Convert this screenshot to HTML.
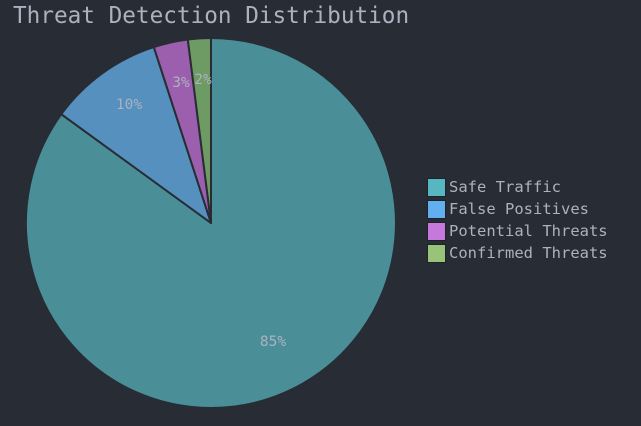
<!DOCTYPE html>
<html><head><style>
html,body{margin:0;padding:0;background:#282c34;width:641px;height:426px;overflow:hidden}
svg{display:block}
text{font-family:"DejaVu Sans Mono","Liberation Mono",monospace}
</style></head><body>
<svg width="641" height="426" viewBox="0 0 641 426">
<rect width="641" height="426" fill="#282c34"/>
<text x="13" y="23" font-size="22.7" fill="#abb2bf">Threat Detection Distribution</text>
<g stroke="#282c34" stroke-width="2" stroke-linejoin="round">
<path d="M211,223 L211,38 A185,185 0 1 1 61.3,114.2 Z" fill="#4a8f98"/>
<path d="M211,223 L61.3,114.2 A185,185 0 0 1 153.8,47.1 Z" fill="#5590bf"/>
<path d="M211,223 L153.8,47.1 A185,185 0 0 1 187.8,39.5 Z" fill="#9c5fad"/>
<path d="M211,223 L187.8,39.5 A185,185 0 0 1 211,38 Z" fill="#6e9a64"/>
</g>
<g font-size="14.5" fill="#abb2bf" text-anchor="middle">
<text x="273" y="346">85%</text>
<text x="129" y="109">10%</text>
<text x="181" y="87">3%</text>
<text x="203" y="84">2%</text>
</g>
<g stroke="#1f2329" stroke-width="1">
<rect x="427.5" y="178.5" width="18" height="18" fill="#56b6c2"/>
<rect x="427.5" y="200.5" width="18" height="18" fill="#61afef"/>
<rect x="427.5" y="222.5" width="18" height="18" fill="#c678dd"/>
<rect x="427.5" y="244.5" width="18" height="18" fill="#98c379"/>
</g>
<g font-size="15.5" fill="#abb2bf">
<text x="449" y="192">Safe Traffic</text>
<text x="449" y="214">False Positives</text>
<text x="449" y="236">Potential Threats</text>
<text x="449" y="258">Confirmed Threats</text>
</g>
</svg>
</body></html>
